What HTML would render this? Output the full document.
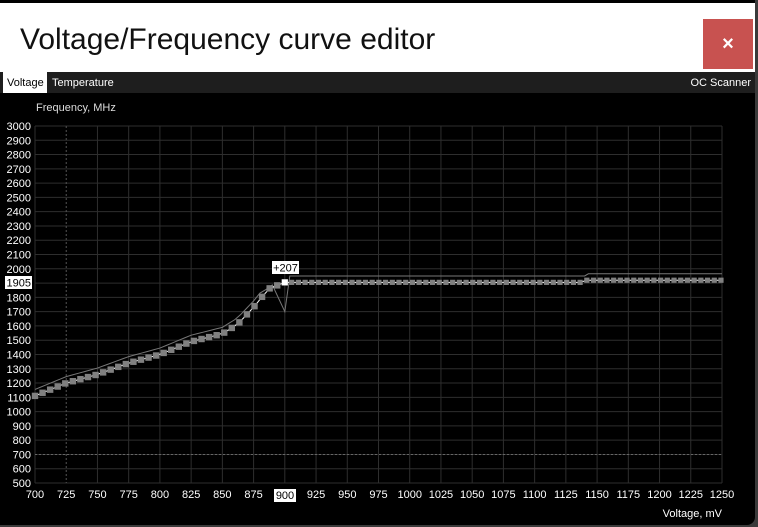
<!DOCTYPE html><html><head><meta charset="utf-8"><style>
body{margin:0;width:758px;height:527px;background:#3a3a3a;overflow:hidden;font-family:"Liberation Sans",Arial,sans-serif}
#win{position:absolute;left:0;top:0;width:755px;height:525px;background:#000;border-radius:0 0 8px 0;overflow:hidden}
#hdr{position:absolute;left:0;top:3px;width:755px;height:69px;background:#fff}
#title{position:absolute;left:20px;top:20px;font-size:30px;color:#111}
#close{position:absolute;left:703px;top:16px;width:50px;height:50px;background:#c85250;color:#fff;font-size:20px;text-align:center;line-height:50px;font-weight:bold}
#tabs{position:absolute;left:0;top:72px;width:755px;height:21px;background:#1e1e1e;font-size:11px;color:#fff}
#tabs span{position:absolute;top:5px}
</style></head><body><div id="win">
<div id="hdr"><div id="title">Voltage/Frequency curve editor</div><div id="close">×</div></div>
<div id="tabs"><div style="position:absolute;left:3px;top:0;width:44px;height:21px;background:#fff"></div><span style="left:7px;color:#000">Voltage</span><span style="left:52px">Temperature</span><span style="right:4px">OC Scanner</span></div>
<svg id="s" width="755" height="525" style="position:absolute;left:0;top:0" font-family="Liberation Sans, Arial, sans-serif" font-size="11"></svg>
</div>
<script>
var s=document.getElementById('s'),h='';
function X(v){return 35+(v-700)*687/550}
function Y(f){return 126+(3000-f)*357/2500}
h+='<text x="36" y="111" fill="#ddd">Frequency, MHz</text>';
for(var f=500;f<=3000;f+=100){var y=Y(f);h+='<line x1="35" x2="722" y1="'+y+'" y2="'+y+'" stroke="#2e2e2e"/>';
if(f!=1900)h+='<text x="31" y="'+(y+4)+'" fill="#fff" text-anchor="end">'+f+'</text>';}
for(var v=700;v<=1250;v+=25){var x=X(v);if(v!=725)h+='<line y1="126" y2="483" x1="'+x+'" x2="'+x+'" stroke="#2e2e2e"/>';
if(v!=900)h+='<text x="'+x+'" y="498" fill="#fff" text-anchor="middle">'+v+'</text>';}
h+='<line y1="126" y2="483" x1="'+X(725)+'" x2="'+X(725)+'" stroke="#555" stroke-dasharray="2,2"/>';
h+='<line x1="35" x2="722" y1="'+Y(700)+'" y2="'+Y(700)+'" stroke="#666" stroke-dasharray="2,2"/>';
h+='<rect x="274" y="489" width="22" height="13" fill="#fff"/><text x="285" y="499" text-anchor="middle" fill="#000">900</text>';
h+='<text x="722" y="517" fill="#fff" text-anchor="end">Voltage, mV</text>';
var K=[[700,1110],[725,1200],[750,1260],[775,1340],[800,1400],[825,1490],[850,1545],[862,1610],[875,1730],[887,1860],[900,1905]];
function F(v){for(var i=1;i<K.length;i++)if(v<=K[i][0]){var a=K[i-1],b=K[i];return a[1]+(b[1]-a[1])*(v-a[0])/(b[0]-a[0]);}return 1905}
var pts=[];
for(var v=700;v<900;v+=6.06)pts.push([v,F(v)]);
var pts2=[];
for(var v=905.5;v<=1250;v+=5.37)pts2.push([v,v>1140?1920:1905]);
var o='';for(var v=700;v<=893;v+=5)o+=X(v)+','+(Y(F(v)+45)+(v>880?4:0))+' ';
o+=X(900)+','+Y(1700)+' '+X(904)+','+Y(1950)+' '+X(1140)+','+Y(1950)+' '+X(1143)+','+Y(1965)+' 722,'+Y(1965);
h+='<polyline points="'+o+'" fill="none" stroke="#777" stroke-width="1"/>';
var pl=[];pts.forEach(function(p){pl.push(X(p[0])+','+Y(p[1]))});pl.push(X(900)+','+Y(1905));pts2.forEach(function(p){pl.push(X(p[0])+','+Y(p[1]))});
h+='<polyline points="'+pl.join(' ')+'" fill="none" stroke="#fff" stroke-width="1"/>';
pts.forEach(function(p){h+='<rect x="'+(X(p[0])-3.2)+'" y="'+(Y(p[1])-3.2)+'" width="6.4" height="6.4" fill="#808080"/>'});
pts2.forEach(function(p){h+='<rect x="'+(X(p[0])-2.6)+'" y="'+(Y(p[1])-2.6)+'" width="5.2" height="5.2" fill="#808080"/>'});
h+='<rect x="'+(X(900)-3)+'" y="'+(Y(1905)-3)+'" width="6" height="6" fill="#fff"/>';
h+='<rect x="5" y="276" width="27" height="13" fill="#fff"/><text x="31" y="286.5" text-anchor="end" fill="#000">1905</text>';
h+='<rect x="272" y="261" width="27" height="13" fill="#fff"/><text x="285.5" y="271.5" text-anchor="middle" fill="#000">+207</text>';
s.innerHTML=h;
</script></body></html>
